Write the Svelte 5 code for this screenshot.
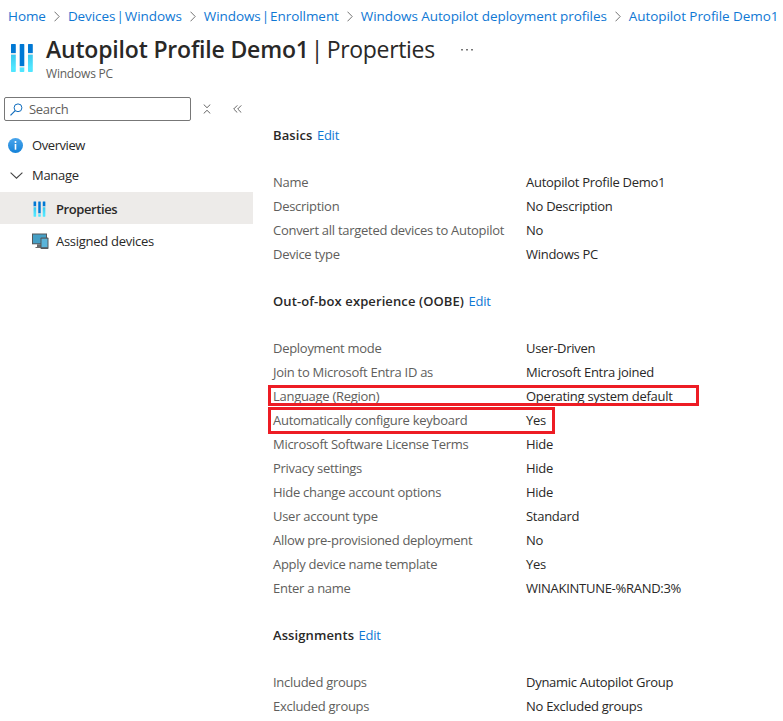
<script>
  const crumbs = [
    'Home',
    'Devices | Windows',
    'Windows | Enrollment',
    'Windows Autopilot deployment profiles',
    'Autopilot Profile Demo1'
  ];

  const sections = [
    {
      title: 'Basics',
      rows: [
        ['Name', 'Autopilot Profile Demo1'],
        ['Description', 'No Description'],
        ['Convert all targeted devices to Autopilot', 'No'],
        ['Device type', 'Windows PC']
      ]
    },
    {
      title: 'Out-of-box experience (OOBE)',
      rows: [
        ['Deployment mode', 'User-Driven'],
        ['Join to Microsoft Entra ID as', 'Microsoft Entra joined'],
        ['Language (Region)', 'Operating system default', 'mark-language'],
        ['Automatically configure keyboard', 'Yes', 'mark-keyboard'],
        ['Microsoft Software License Terms', 'Hide'],
        ['Privacy settings', 'Hide'],
        ['Hide change account options', 'Hide'],
        ['User account type', 'Standard'],
        ['Allow pre-provisioned deployment', 'No'],
        ['Apply device name template', 'Yes'],
        ['Enter a name', 'WINAKINTUNE-%RAND:3%']
      ]
    },
    {
      title: 'Assignments',
      rows: [
        ['Included groups', 'Dynamic Autopilot Group'],
        ['Excluded groups', 'No Excluded groups']
      ]
    }
  ];
</script>

{#snippet bars(size, id)}
  <svg width={size} height={size * 30 / 24} viewBox="0 0 24 30">
    <defs>
      <linearGradient id={id} x1="0" y1="0" x2="0" y2="1">
        <stop offset="0" stop-color="#3cc8ee" />
        <stop offset=".75" stop-color="#50e6ff" />
      </linearGradient>
    </defs>
    <path d="M1 1.600q0-.6.6-.6h3.600q.6 0 .6.600V10H1zM9.700 1.600q0-.6.6-.6h3.400q.6 0 .6.600V23H9.700zM18 1.600q0-.6.6-.6h3.600q.6 0 .6.600V10H18z" fill="#0078d4" />
    <path d="M1 10h4.800v1.700H1zM18 10h4.800v1.700H18zM9.700 23h4.600v1.600H9.700z" fill="#dfe6ea" />
    <path d="M1 11.700h4.800v16.600q0 .7-.7.700H1.700q-.7 0-.7-.7zM18 11.700h4.800v16.600q0 .7-.7.700h-3.400q-.7 0-.7-.7zM9.700 24.600h4.600v3.700q0 .7-.7.700h-3.200q-.7 0-.7-.7z" fill="url(#{id})" />
  </svg>
{/snippet}

<div class="page">
  <nav class="crumbs">
    {#each crumbs as crumb, i}
      {#if i > 0}
        <svg class="sep" width="6" height="11" viewBox="0 0 6 11"><path d="M.5 .7 5.200 5.500.5 10.300" fill="none" stroke="#747474" /></svg>
      {/if}
      <a href="#top" class:piped={crumb.includes('|')}>{crumb}</a>
    {/each}
  </nav>

  <header>
    <div class="logo">{@render bars(24, 'bar-large')}</div>
    <div class="heading">
      <h1><b>Autopilot Profile Demo1</b><span> | Properties</span></h1>
      <p>Windows PC</p>
    </div>
    <svg class="dots" width="12" height="2" viewBox="0 0 12 2"><path d="M0 0h2v1.500H0zM5 0h2v1.500H5zM10 0h2v1.500h-2z" fill="#777" /></svg>
  </header>

  <div class="body">
    <aside>
      <div class="tools">
        <div class="search">
          <svg width="13" height="13" viewBox="0 0 13 13" fill="none" stroke="#0f6cbd"><circle cx="8" cy="4.800" r="3.900" /><path d="M5.200 7.600.5 12.300" stroke-width="1.200" /></svg>
          <span>Search</span>
        </div>
        <svg class="expand" width="8" height="10" viewBox="0 0 8 10" fill="none" stroke="#666"><path d="M.7.500 4 3.700 7.300.500M.7 9.500 4 6.300l3.300 3.200" /></svg>
        <svg class="collapse" width="9" height="8" viewBox="0 0 9 8" fill="none" stroke="#666"><path d="M4.300.400.700 4l3.600 3.600M8.300.400 4.700 4l3.600 3.600" /></svg>
      </div>

      <div class="item overview">
        <svg width="15" height="15" viewBox="0 0 15 15">
          <defs><linearGradient id="info" x1="0" y1="0" x2="0" y2="1"><stop stop-color="#4aa5ec" /><stop offset="1" stop-color="#1482d8" /></linearGradient></defs>
          <circle cx="7.500" cy="7.500" r="7.500" fill="url(#info)" />
          <circle cx="7.500" cy="3.900" r="1" fill="#fff" /><path d="M6.700 6h1.600v5.700H6.700z" fill="#fff" />
        </svg>
        <span>Overview</span>
      </div>
      <div class="item manage">
        <svg width="13" height="7" viewBox="0 0 13 7"><path d="M.6.600 6.500 6.200 12.400.600" fill="none" stroke="#444" stroke-width="1.100" /></svg>
        <span>Manage</span>
      </div>
      <div class="item child selected">
        <div class="icon">{@render bars(13, 'bar-small')}</div>
        <b>Properties</b>
      </div>
      <div class="item child">
        <div class="icon">
          <svg width="17" height="16" viewBox="0 0 17 16">
            <path d="M0 .500h15v10.800H0z" fill="#55585b" /><path d="M1 1.500h13v8.800H1z" fill="#459fc5" />
            <path d="M5 11.300h4V14h1.500v1H3.500v-1H5z" fill="#696b6d" />
            <rect x="8.500" y="4.500" width="8" height="11.500" rx=".8" fill="#55585b" /><path d="M9.500 5.700h6v8.500h-6z" fill="#5bb4d9" />
          </svg>
        </div>
        <span>Assigned devices</span>
      </div>
    </aside>

    <main>
      {#each sections as section}
        <section>
          <h2>{section.title} <a href="#edit">Edit</a></h2>
          <dl>
            {#each section.rows as [label, value, mark]}
              <div class="row {mark ?? ''}"><dt>{label}</dt><dd>{value}</dd></div>
            {/each}
          </dl>
        </section>
      {/each}
    </main>
  </div>
</div>

<style>
  :global(body) { background: #fff; }
  .page {
    width: 783px;
    height: 721px;
    overflow: hidden;
    box-sizing: border-box;
    font: 13px/24px "Open Sans", "Noto Sans", sans-serif;
    letter-spacing: -0.28px;
    color: #292827;
  }
  svg { display: block; flex: none; }
  a { color: #0f78d4; text-decoration: none; }
  h1, h2, p, dl, dd { margin: 0; }
  b { font-weight: 600; }
  .crumbs {
    display: flex;
    align-items: center;
    height: 32px;
    padding-left: 8px;
    font-size: 13.5px;
    letter-spacing: -0.07px;
    white-space: nowrap;
  }
  .piped { word-spacing: -2.4px; }
  .sep { margin: 1px 8px 0; }
  header { display: flex; height: 58px; }
  .logo { padding: 11px 0 0 10px; }
  .heading { padding-left: 12px; }
  h1 { font-size: 23px; line-height: 34px; font-weight: 400; letter-spacing: -0.33px; white-space: nowrap; }
  h1 b { letter-spacing: -0.18px; }
  h1 span { margin-left: 2px; word-spacing: -2px; }
  p { font-size: 12px; line-height: 16px; color: #605e5c; letter-spacing: -0.2px; }
  .dots { margin: 17px 0 0 26px; }
  .body { display: flex; }
  aside { width: 253px; flex: none; }
  .tools { display: flex; align-items: center; height: 38px; padding-left: 4px; }
  .search {
    display: flex;
    align-items: center;
    gap: 6px;
    box-sizing: border-box;
    width: 187px;
    height: 24px;
    padding-left: 5px;
    border: 1px solid #777;
    border-radius: 2px;
    color: #605e5c;
  }
  .expand { margin-left: 12px; }
  .collapse { margin-left: 22px; }
  .item { display: flex; align-items: center; height: 32px; }
  .overview { padding-left: 8px; gap: 9px; height: 34px; letter-spacing: -0.42px; }
  .manage { padding-left: 10px; gap: 9px; height: 26px; margin-bottom: 4px; }
  .child { padding-left: 32px; }
  .child > b, .child > span { padding-top: 2px; }
  .child > b { letter-spacing: -0.42px; }
  .icon { display: flex; justify-content: center; width: 17px; margin: 2px 7px 0 0; }
  .selected .icon { margin-left: -1px; margin-right: 8px; }
  .selected { background: #edebe9; }
  main { padding: 33px 0 0 20px; }
  section { margin-bottom: 23px; }
  h2 { font-size: 13px; font-weight: 600; line-height: 24px; margin-bottom: 23px; letter-spacing: 0.1px; }
  h2 a { font-weight: 400; letter-spacing: -0.25px; margin-left: 1px; }
  .row { position: relative; display: flex; height: 24px; white-space: nowrap; }
  dt { width: 253px; color: #605e5c; }
  .row::after { position: absolute; left: -5px; box-sizing: border-box; border: 3px solid #ed1c24; }
  .mark-language::after { content: ""; top: 1px; width: 431px; height: 21px; }
  .mark-keyboard::after { content: ""; top: -1px; width: 287px; height: 27px; }
</style>
